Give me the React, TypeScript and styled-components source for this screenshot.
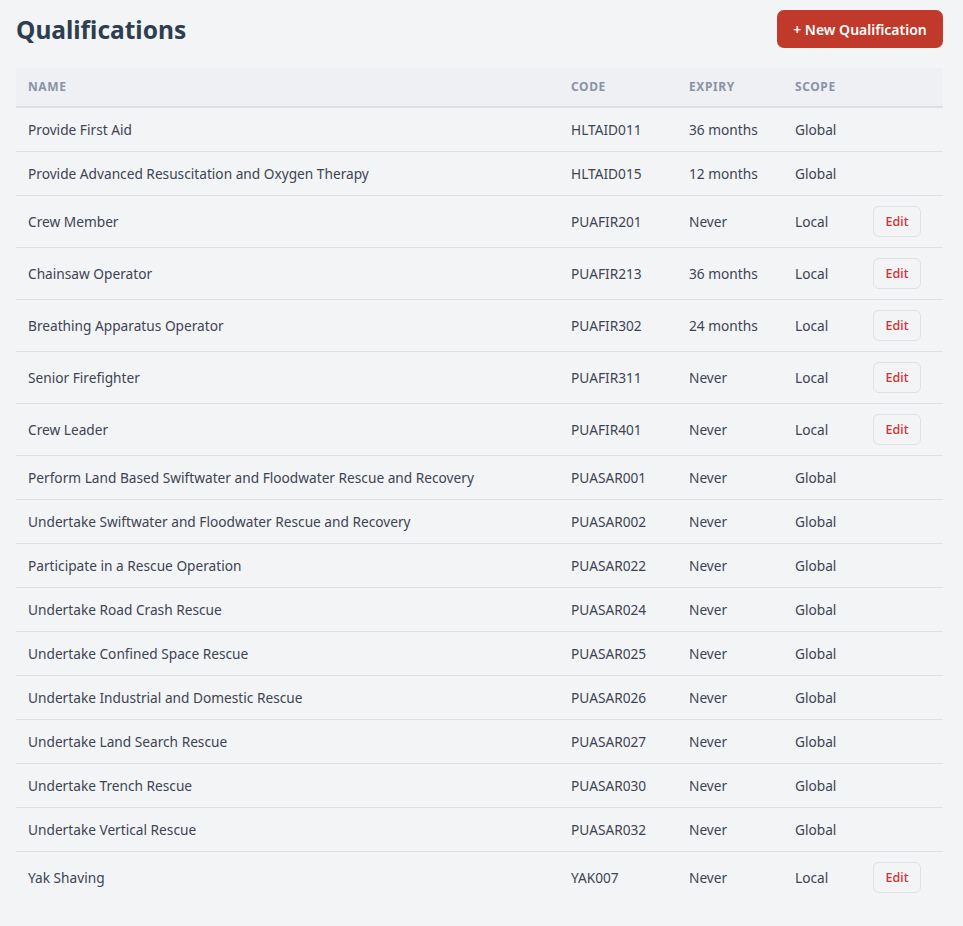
import React from "react";
import styled, { createGlobalStyle } from "styled-components";

const Global = createGlobalStyle`
  html, body { margin: 0; padding: 0; background: #f3f4f6; }
  body { font-family: "Noto Sans", "Open Sans", sans-serif; color: #374151; }
`;

const Page = styled.div`
  padding: 10px 20px 24px 16px;
`;

const Header = styled.div`
  display: flex;
  align-items: center;
  justify-content: space-between;
  margin-bottom: 20px;
`;

const Title = styled.h1`
  margin: 0;
  font-size: 24.5px;
  font-weight: 700;
  color: #2c3e50;
`;

const PrimaryButton = styled.button`
  background: #c0392b;
  color: #fff;
  border: none;
  border-radius: 7px;
  height: 38px;
  width: 166px;
  padding: 0;
  font-family: inherit;
  font-size: 14px;
  font-weight: 600;
  cursor: pointer;
`;

const Table = styled.table`
  width: 100%;
  table-layout: fixed;
  border-collapse: collapse;
  font-size: 13.7px;
`;

const Th = styled.th<{ $w?: number }>`
  text-align: left;
  background: #eef0f4;
  color: #8a93a3;
  font-size: 12px;
  font-weight: 700;
  text-transform: uppercase;
  letter-spacing: 0.6px;
  padding: 11px 12px;
  line-height: 16px;
  border-bottom: 2px solid #dcdfe5;
  width: ${(p) => (p.$w ? `${p.$w}px` : "auto")};
  box-sizing: border-box;
`;

const Tr = styled.tr<{ $last?: boolean }>`
  border-bottom: 1px solid ${(p) => (p.$last ? "transparent" : "#dcdfe5")};
`;

const Td = styled.td`
  padding: 12px 12px;
  line-height: 19px;
  color: #3d4452;
  vertical-align: middle;
  white-space: nowrap;
`;

const ActionTd = styled(Td)`
  padding: 10px 12px;
`;

const EditButton = styled.button`
  background: transparent;
  border: 1px solid #dfe1e7;
  border-radius: 6px;
  color: #d32f2f;
  font-family: inherit;
  font-size: 12.5px;
  font-weight: 500;
  height: 31px;
  width: 48px;
  padding: 0;
  cursor: pointer;
`;

type Row = { name: string; code: string; expiry: string; scope: string };

const rows: Row[] = [
  { name: "Provide First Aid", code: "HLTAID011", expiry: "36 months", scope: "Global" },
  { name: "Provide Advanced Resuscitation and Oxygen Therapy", code: "HLTAID015", expiry: "12 months", scope: "Global" },
  { name: "Crew Member", code: "PUAFIR201", expiry: "Never", scope: "Local" },
  { name: "Chainsaw Operator", code: "PUAFIR213", expiry: "36 months", scope: "Local" },
  { name: "Breathing Apparatus Operator", code: "PUAFIR302", expiry: "24 months", scope: "Local" },
  { name: "Senior Firefighter", code: "PUAFIR311", expiry: "Never", scope: "Local" },
  { name: "Crew Leader", code: "PUAFIR401", expiry: "Never", scope: "Local" },
  { name: "Perform Land Based Swiftwater and Floodwater Rescue and Recovery", code: "PUASAR001", expiry: "Never", scope: "Global" },
  { name: "Undertake Swiftwater and Floodwater Rescue and Recovery", code: "PUASAR002", expiry: "Never", scope: "Global" },
  { name: "Participate in a Rescue Operation", code: "PUASAR022", expiry: "Never", scope: "Global" },
  { name: "Undertake Road Crash Rescue", code: "PUASAR024", expiry: "Never", scope: "Global" },
  { name: "Undertake Confined Space Rescue", code: "PUASAR025", expiry: "Never", scope: "Global" },
  { name: "Undertake Industrial and Domestic Rescue", code: "PUASAR026", expiry: "Never", scope: "Global" },
  { name: "Undertake Land Search Rescue", code: "PUASAR027", expiry: "Never", scope: "Global" },
  { name: "Undertake Trench Rescue", code: "PUASAR030", expiry: "Never", scope: "Global" },
  { name: "Undertake Vertical Rescue", code: "PUASAR032", expiry: "Never", scope: "Global" },
  { name: "Yak Shaving", code: "YAK007", expiry: "Never", scope: "Local" },
];

export default function App() {
  return (
    <Page>
      <Global />
      <Header>
        <Title>Qualifications</Title>
        <PrimaryButton>+ New Qualification</PrimaryButton>
      </Header>
      <Table>
        <thead>
          <tr>
            <Th>Name</Th>
            <Th $w={118}>Code</Th>
            <Th $w={106}>Expiry</Th>
            <Th $w={78}>Scope</Th>
            <Th $w={82}></Th>
          </tr>
        </thead>
        <tbody>
          {rows.map((r, i) => {
            const local = r.scope === "Local";
            return (
              <Tr key={r.code} $last={i === rows.length - 1}>
                <Td>{r.name}</Td>
                <Td>{r.code}</Td>
                <Td>{r.expiry}</Td>
                <Td>{r.scope}</Td>
                {local ? (
                  <ActionTd>
                    <EditButton>Edit</EditButton>
                  </ActionTd>
                ) : (
                  <Td />
                )}
              </Tr>
            );
          })}
        </tbody>
      </Table>
    </Page>
  );
}
